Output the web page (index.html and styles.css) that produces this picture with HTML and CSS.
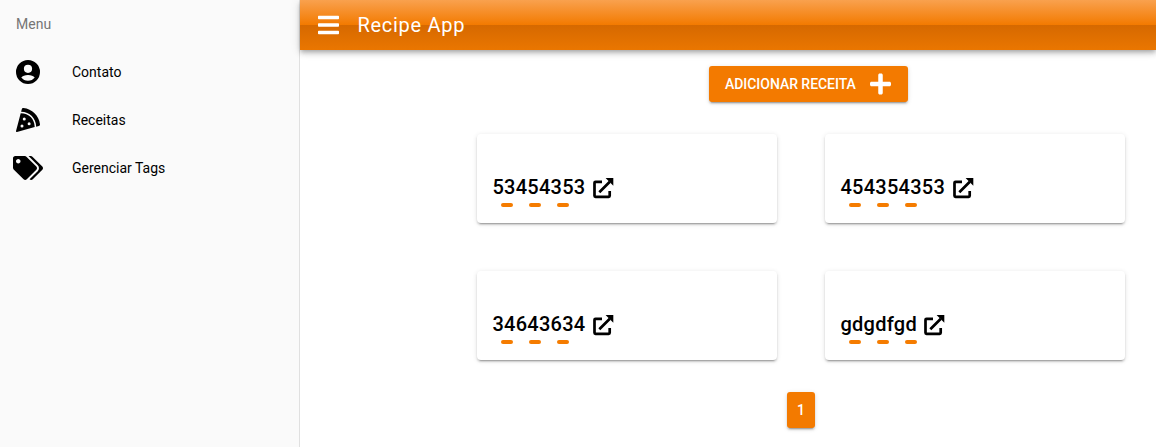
FILE: index.html
```html
<!DOCTYPE html>
<html lang="pt-BR">
<head>
<meta charset="utf-8">
<title>Recipe App</title>
<link rel="stylesheet" href="styles.css">
</head>
<body>
<svg class="defs" aria-hidden="true">
  <symbol id="open" viewBox="0 0 21 21"><path d="M9 3.8H2.500a1 1 0 0 0-1 1v13a1 1 0 0 0 1 1h13.200a1 1 0 0 0 1-1V13M6.300 14.200 16.800 3.700" fill="none" stroke="currentColor" stroke-width="2.700"/><path d="M12.600 0H20.300v7.700z"/></symbol>
</svg>
<aside class="sidebar">
  <h2 class="menu-title">Menu</h2>
  <nav>
    <a class="item"><span class="item-icon"><svg width="24" height="24" viewBox="0 0 24 24"><path fill-rule="evenodd" d="M12 0a12 12 0 1 0 0 24 12 12 0 0 0 0-24zm0 4.700a4.100 4.100 0 1 1 0 8.200 4.100 4.100 0 0 1 0-8.200zM12 15.100c3 0 5.600.9 6.700 2.400-1.500 2-3.900 3.300-6.700 3.300s-5.200-1.300-6.700-3.300c1.100-1.500 3.700-2.400 6.700-2.400z"/></svg></span>Contato</a>
    <a class="item"><span class="item-icon"><svg width="24" height="24" viewBox="0 0 512 512"><path d="M158.87.15c-16.16-1.52-31.2 8.42-35.33 24.12l-14.81 56.27c187.62 5.49 314.54 130.61 322.48 317l56.94-15.78c15.72-4.36 25.49-19.68 23.62-35.9C490.89 165.08 340.78 17.32 158.87.15zm-58.47 112L.55 491.64a16.21 16.21 0 0 0 20 19.75l379-105.1c-4.27-174.89-123.08-292.14-299.15-294.1zM128 416a32 32 0 1 1 32-32 32 32 0 0 1-32 32zm48-152a32 32 0 1 1 32-32 32 32 0 0 1-32 32zm104 104a32 32 0 1 1 32-32 32 32 0 0 1-32 32z"/></svg></span>Receitas</a>
    <a class="item"><span class="item-icon"><svg width="30" height="24" viewBox="0 0 640 512"><path d="M497.941 225.941L286.059 14.059A48 48 0 0 0 252.118 0H48C21.49 0 0 21.49 0 48v204.118a48 48 0 0 0 14.059 33.941l211.882 211.882c18.744 18.745 49.136 18.746 67.882 0l204.118-204.118c18.745-18.745 18.745-49.137 0-67.882zM112 160c-26.51 0-48-21.49-48-48s21.49-48 48-48 48 21.49 48 48-21.49 48-48 48zm513.941 133.823L421.823 497.941c-18.745 18.745-49.137 18.745-67.882 0l-.36-.36L527.64 323.522c16.999-16.999 26.36-39.6 26.36-63.64s-9.362-46.641-26.36-63.64L331.397 0h48.721a48 48 0 0 1 33.941 14.059l211.882 211.882c18.745 18.745 18.745 49.137 0 67.882z"/></svg></span>Gerenciar Tags</a>
  </nav>
</aside>
<div class="page">
  <header class="toolbar">
    <svg width="21" height="24" viewBox="0 0 448 512"><path d="M16 132h416c8.837 0 16-7.163 16-16V76c0-8.837-7.163-16-16-16H16C7.163 60 0 67.163 0 76v40c0 8.837 7.163 16 16 16zm0 160h416c8.837 0 16-7.163 16-16v-40c0-8.837-7.163-16-16-16H16c-8.837 0-16 7.163-16 16v40c0 8.837 7.163 16 16 16zm0 160h416c8.837 0 16-7.163 16-16v-40c0-8.837-7.163-16-16-16H16c-8.837 0-16 7.163-16 16v40c0 8.837 7.163 16 16 16z"/></svg>
    <h1 class="title">Recipe App</h1>
  </header>
  <main class="content">
    <button class="add raised">ADICIONAR RECEITA<svg width="21" height="24" viewBox="0 0 448 512"><path d="M416 208H272V64c0-17.67-14.33-32-32-32h-32c-17.67 0-32 14.33-32 32v144H32c-17.67 0-32 14.33-32 32v32c0 17.67 14.33 32 32 32h144v144c0 17.67 14.33 32 32 32h32c17.67 0 32-14.33 32-32V304h144c17.67 0 32-14.33 32-32v-32c0-17.67-14.33-32-32-32z"/></svg></button>
    <div class="cards">
      <article class="card raised"><h3 class="name">53454353<svg class="open"><use href="#open"/></svg></h3><div class="tags"><i></i><i></i><i></i></div></article>
      <article class="card raised"><h3 class="name">454354353<svg class="open"><use href="#open"/></svg></h3><div class="tags"><i></i><i></i><i></i></div></article>
      <article class="card raised"><h3 class="name">34643634<svg class="open"><use href="#open"/></svg></h3><div class="tags"><i></i><i></i><i></i></div></article>
      <article class="card raised"><h3 class="name">gdgdfgd<svg class="open"><use href="#open"/></svg></h3><div class="tags"><i></i><i></i><i></i></div></article>
    </div>
    <button class="page-number raised">1</button>
  </main>
</div>
</body>
</html>
```
FILE: styles.css
```css
* { box-sizing: border-box; }
body {
  margin: 0;
  display: flex;
  height: 447px;
  overflow: hidden;
  font-family: Roboto, sans-serif;
  font-size: 14px;
  color: #000;
  background: #fff;
}
svg { display: block; fill: currentColor; flex: none; }
h1, h2, h3 { margin: 0; }
.defs { display: none; }
.sidebar {
  width: 300px;
  flex: none;
  background: #fafafa;
  border-right: 1px solid #e0e0e0;
}
.menu-title {
  height: 48px;
  padding-left: 16px;
  line-height: 48px;
  font-size: 14px;
  font-weight: 400;
  color: #757575;
}
.item {
  display: flex;
  align-items: center;
  height: 48px;
}
.item-icon {
  display: flex;
  justify-content: center;
  width: 56px;
  margin-right: 16px;
}
.page { flex: 1; }
.toolbar {
  display: flex;
  align-items: center;
  height: 50px;
  padding-left: 18px;
  gap: 18.5px;
  color: #fff;
  background: linear-gradient(#f9a14e, #f37a00 50%, #d66900 50%, #ea7600);
  box-shadow: 0 2px 4px -1px rgba(0,0,0,.2), 0 4px 5px rgba(0,0,0,.14), 0 1px 10px rgba(0,0,0,.12);
}
.title {
  font-size: 20px;
  font-weight: 400;
  letter-spacing: .7px;
}
.content {
  display: flex;
  flex-direction: column;
  align-items: center;
  padding-top: 16px;
  padding-left: 146px;
}
.raised {
  border: 0;
  border-radius: 3px;
  box-shadow: 0 3px 1px -2px rgba(0,0,0,.2), 0 2px 2px rgba(0,0,0,.14), 0 1px 5px rgba(0,0,0,.12);
}
.add, .page-number {
  height: 36px;
  font: 500 14px Roboto, sans-serif;
  color: #fff;
  background: #f37a00;
}
.add {
  display: flex;
  align-items: center;
  justify-content: space-between;
  width: 199px;
  padding: 0 17.5px 0 16px;
  margin-left: 15px;
  letter-spacing: -.04px;
}
.cards {
  display: grid;
  grid-template-columns: 300px 300px;
  gap: 48px;
  margin: 32px 0;
}
.card {
  height: 89px;
  padding: 41px 16px 0;
  border-radius: 4px;
  background: #fff;
}
.name {
  display: flex;
  align-items: center;
  height: 24px;
  gap: 7.5px;
  margin-left: -.5px;
  font-size: 20px;
  font-weight: 500;
  letter-spacing: .25px;
}
.open { width: 21px; height: 21px; margin-top: 3px; }
.tags {
  display: flex;
  gap: 16px;
  padding: 4px 8px;
}
.tags i {
  width: 12px;
  height: 4px;
  border-radius: 2px;
  background: #f57c00;
}
.page-number { width: 28px; padding: 0; }
```
